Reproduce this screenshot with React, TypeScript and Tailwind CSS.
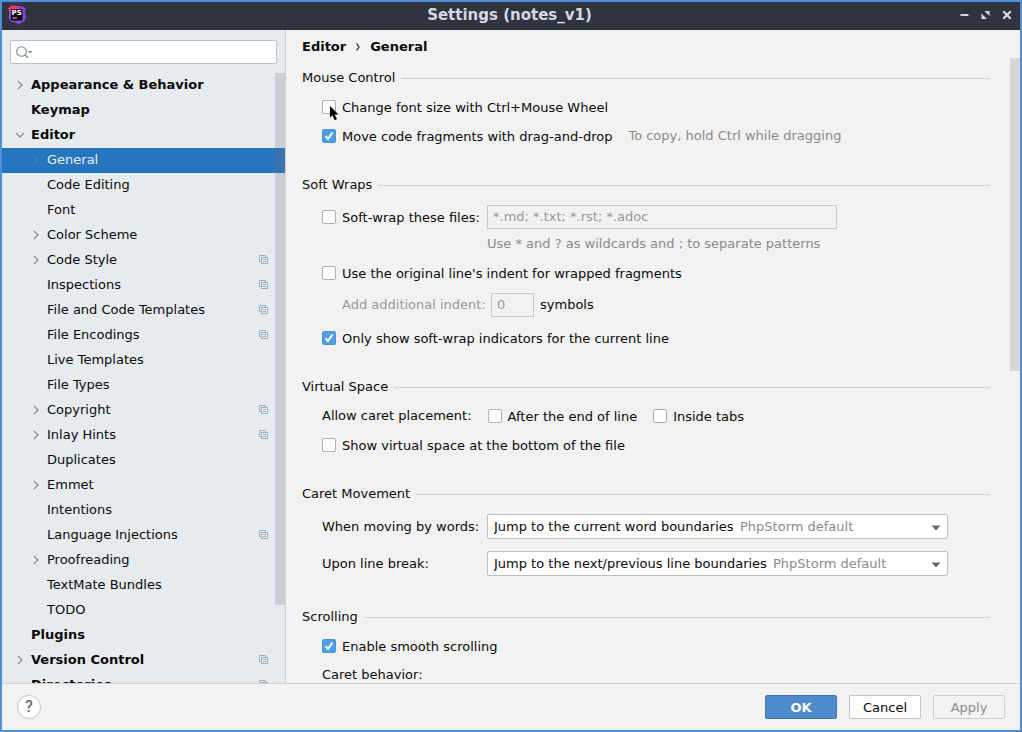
import { useId, type ReactNode } from "react";

type Item = {
  label: string;
  level?: number;
  arrow?: "right" | "down";
  shared?: boolean;
  selected?: boolean;
};

const items: Item[] = [
  { label: "Appearance & Behavior", arrow: "right" },
  { label: "Keymap" },
  { label: "Editor", arrow: "down" },
  { label: "General", level: 1, arrow: "right", selected: true },
  { label: "Code Editing", level: 1 },
  { label: "Font", level: 1 },
  { label: "Color Scheme", level: 1, arrow: "right" },
  { label: "Code Style", level: 1, arrow: "right", shared: true },
  { label: "Inspections", level: 1, shared: true },
  { label: "File and Code Templates", level: 1, shared: true },
  { label: "File Encodings", level: 1, shared: true },
  { label: "Live Templates", level: 1 },
  { label: "File Types", level: 1 },
  { label: "Copyright", level: 1, arrow: "right", shared: true },
  { label: "Inlay Hints", level: 1, arrow: "right", shared: true },
  { label: "Duplicates", level: 1 },
  { label: "Emmet", level: 1, arrow: "right" },
  { label: "Intentions", level: 1 },
  { label: "Language Injections", level: 1, shared: true },
  { label: "Proofreading", level: 1, arrow: "right" },
  { label: "TextMate Bundles", level: 1 },
  { label: "TODO", level: 1 },
  { label: "Plugins" },
  { label: "Version Control", arrow: "right", shared: true },
  { label: "Directories", shared: true },
];

function Logo() {
  return (
    <svg width="20" height="20" viewBox="0 0 20 20" aria-hidden="true">
      <defs>
        <linearGradient id="logo-a" x1="0" y1="0" x2="1" y2="1">
          <stop offset="0" stopColor="#d935a0" />
          <stop offset="0.4" stopColor="#9040d0" />
          <stop offset="1" stopColor="#7a48f0" />
        </linearGradient>
      </defs>
      <path d="M1.500 3 5 1l9 0 4.500 2-.5 4 1 5-1.500 4-6 3.500-3-2-4.500-.5L1.500 13l.8-4z" fill="url(#logo-a)" />
      <path d="M1.500 3 4.500 0.500 10 1l1.500 3H5L2.300 7.500z" fill="#ee3678" />
      <rect x="4" y="4" width="11.500" height="11.500" fill="#0c0610" />
      <text x="4.500" y="10" fontSize="7" fontWeight="700" fill="#fff" fontFamily="DejaVu Sans, sans-serif">
        PS
      </text>
      <rect x="5.500" y="12.500" width="4.500" height="1" fill="#ddd" />
    </svg>
  );
}

function Chevron({ dir, selected }: { dir: "right" | "down"; selected?: boolean }) {
  return (
    <svg
      width="10"
      height="10"
      viewBox="0 0 10 10"
      fill="none"
      strokeWidth="1.300"
      className={selected ? "stroke-[#4c7fae]" : "stroke-[#8a8f93]"}
      aria-hidden="true"
    >
      <path d={dir === "right" ? "M3 1l4 4-4 4" : "M1 3l4 4 4-4"} />
    </svg>
  );
}

function SharedIcon() {
  return (
    <svg width="9" height="9" viewBox="0 0 9 9" fill="none" stroke="#a3aeb8" aria-hidden="true">
      <path d="M2.500 6.500h-2v-6h6v2" />
      <rect x="2.500" y="2.500" width="6" height="6" />
      <path d="M4 4.500h3M4 6.500h3" />
    </svg>
  );
}

function TreeRow({ item }: { item: Item }) {
  const nested = item.level === 1;
  return (
    <li>
      <button
        type="button"
        className={`flex h-[25px] w-full items-center pb-0.5 pr-[17px] text-left ${nested ? "pl-[29px]" : "pl-[13px] font-bold"} ${
          item.selected ? "bg-[#2675bf] text-[#e8f1f9]" : ""
        }`}
      >
        <span className="flex w-4 shrink-0 items-center">
          {item.arrow && <Chevron dir={item.arrow} selected={item.selected} />}
        </span>
        <span className="flex-1 whitespace-nowrap">{item.label}</span>
        {item.shared && <SharedIcon />}
      </button>
    </li>
  );
}

function Check({ label, checked, children }: { label: string; checked?: boolean; children?: ReactNode }) {
  const id = useId();
  return (
    <div className="flex h-5 items-center">
      <span className="relative flex size-3.5">
        <input
          id={id}
          type="checkbox"
          defaultChecked={checked}
          className="peer size-3.5 appearance-none rounded-xs border border-[#b0b0b0] bg-white checked:border-[#4a94da] checked:bg-[#4f9ee3]"
        />
        <svg
          viewBox="0 0 14 14"
          className="pointer-events-none absolute inset-0 hidden size-3.5 peer-checked:block"
          fill="none"
          stroke="#fff"
          strokeWidth="2"
          aria-hidden="true"
        >
          <path d="M3.500 7.300l2.500 2.700 4.500-6.500" />
        </svg>
        {children}
      </span>
      <label htmlFor={id} className="pt-0.5 pl-1.5 whitespace-nowrap">
        {label}
      </label>
    </div>
  );
}

function Section({ title, children }: { title: string; children: ReactNode }) {
  return (
    <section>
      <div className="flex h-5 items-center gap-1.5">
        <h2 className="pt-0.5">{title}</h2>
        <div className="mt-0.5 h-px flex-1 bg-[#cfcfcf]" />
      </div>
      <div className="flex flex-col gap-[9px] pt-2.5 pl-5">{children}</div>
    </section>
  );
}

function Choice({ label, value }: { label: string; value: string }) {
  const id = useId();
  return (
    <div className="flex items-center">
      <label htmlFor={id} className="w-[165px] shrink-0 whitespace-nowrap">
        {label}
      </label>
      <div className="flex h-[25px] w-[461px] items-center rounded-xs border border-[#bfbfbf] bg-white px-1.5">
        <select id={id} className="appearance-none bg-transparent outline-none">
          <option>{value}</option>
        </select>
        <span className="flex-1 pl-1.5 whitespace-nowrap text-[#8a8a8a]">PhpStorm default</span>
        <svg width="10" height="6" viewBox="0 0 10 6" fill="#666" className="mt-0.5" aria-hidden="true">
          <path d="M0.500 0.500h9L5 5.500z" />
        </svg>
      </div>
    </div>
  );
}

export default function App() {
  return (
    <div className="flex h-screen flex-col overflow-hidden border-2 border-[#4d91de] bg-[#f2f2f2] font-['DejaVu_Sans',sans-serif] text-[13px] leading-5 text-[#0a0a0a]">
      <header className="flex h-7 shrink-0 items-center bg-[#2f343f] pr-2 pb-0.5 pl-[5px] text-[#d3dae3]">
        <div className="flex w-16 items-center">
          <Logo />
        </div>
        <h1 className="flex-1 text-center text-[15px] font-bold">Settings (notes_v1)</h1>
        <div className="flex w-16 items-center justify-end gap-3">
          <button type="button" aria-label="Minimize">
            <svg width="9" height="10" viewBox="0 0 9 10" fill="currentColor">
              <path d="M0.500 4h8v2h-8z" />
            </svg>
          </button>
          <button type="button" aria-label="Maximize">
            <svg width="9" height="10" viewBox="0 0 9 10" fill="currentColor">
              <path d="M3.500 1h5v5zM0.500 3.500v5.500h5.500z" />
            </svg>
          </button>
          <button type="button" aria-label="Close">
            <svg width="10" height="10" viewBox="0 0 10 10" fill="none" stroke="currentColor" strokeWidth="2.200">
              <path d="M1.300 1.300l7.400 7.400M8.700 1.300l-7.400 7.400" />
            </svg>
          </button>
        </div>
      </header>

      <div className="flex min-h-0 flex-1">
        <aside className="flex w-[284px] shrink-0 flex-col border-r border-[#d0d3d6] bg-[#e6ebf0]">
          <div className="px-2 pt-2.5 pb-[9px]">
            <div className="flex h-6 items-center rounded-xs border border-[#bdbfc4] bg-white pl-[5px]">
              <svg width="17" height="13" viewBox="0 0 17 13" fill="none" stroke="#7f8b91" aria-hidden="true">
                <circle cx="5.500" cy="5.500" r="4.800" strokeWidth="1.100" />
                <path d="M9 9l3 3" strokeWidth="1.400" />
                <path d="M12 5h4.500L14.250 7.500z" fill="#7f8b91" stroke="none" />
              </svg>
              <input type="text" aria-label="Search settings" className="min-w-0 flex-1 bg-transparent px-1 outline-none" />
            </div>
          </div>
          <nav aria-label="Settings categories" className="relative min-h-0 flex-1 overflow-hidden">
            <ul>
              {items.map((item) => (
                <TreeRow key={item.label} item={item} />
              ))}
            </ul>
            <div className="absolute top-0 right-0 h-[532px] w-2.5 bg-[#737380]/25" />
          </nav>
        </aside>

        <main className="flex min-w-0 flex-1 flex-col">
          <div className="flex h-7 shrink-0 items-center gap-2.5 pt-1.5 pl-4 font-bold">
            <span>Editor</span>
            <svg width="4" height="8" viewBox="0 0 4 8" fill="none" stroke="#222" strokeWidth="1.200" aria-hidden="true">
              <path d="M0.500 0.500L3 4 0.500 7.500" />
            </svg>
            <span>General</span>
          </div>
          <div className="flex min-h-0 flex-1 overflow-hidden">
            <div className="flex min-w-0 flex-1 flex-col gap-7 pt-[9px] pr-5 pl-4">
              <Section title="Mouse Control">
                <Check label="Change font size with Ctrl+Mouse Wheel">
                  <svg
                    width="9"
                    height="15"
                    viewBox="0 0 9 15"
                    className="pointer-events-none absolute top-1.5 left-2"
                    aria-hidden="true"
                  >
                    <path d="M0 0v11.500l2.500-2.300 2.200 5 2.200-1-2.200-4.700H8.500z" fill="#000" />
                  </svg>
                </Check>
                <div className="flex items-center gap-4">
                  <Check label="Move code fragments with drag-and-drop" checked />
                  <span className="whitespace-nowrap text-[#8a8a8a]">To copy, hold Ctrl while dragging</span>
                </div>
              </Section>

              <Section title="Soft Wraps">
                <div className="mt-px">
                  <div className="flex items-center">
                    <div className="w-[165px] shrink-0">
                      <Check label="Soft-wrap these files:" />
                    </div>
                    <input
                      type="text"
                      disabled
                      aria-label="File patterns"
                      defaultValue="*.md; *.txt; *.rst; *.adoc"
                      className="h-6 w-[350px] border border-[#c8c8c8] px-[5px] pb-0.5 text-[#999]"
                    />
                  </div>
                  <p className="pt-[5px] pl-[165px] whitespace-nowrap text-[#8a8a8a]">
                    Use * and ? as wildcards and ; to separate patterns
                  </p>
                </div>
                <Check label="Use the original line's indent for wrapped fragments" />
                <div className="flex items-center pt-px pb-0.5 pl-5">
                  <label htmlFor="indent" className="w-[149px] shrink-0 whitespace-nowrap text-[#999]">
                    Add additional indent:
                  </label>
                  <input
                    id="indent"
                    type="text"
                    disabled
                    defaultValue="0"
                    className="h-6 w-[43px] border border-[#c8c8c8] px-[5px] pb-0.5 text-[#999]"
                  />
                  <span className="pl-1.5">symbols</span>
                </div>
                <Check label="Only show soft-wrap indicators for the current line" checked />
              </Section>

              <Section title="Virtual Space">
                <div className="flex items-center gap-4">
                  <span>Allow caret placement:</span>
                  <Check label="After the end of line" />
                  <Check label="Inside tabs" />
                </div>
                <Check label="Show virtual space at the bottom of the file" />
              </Section>

              <Section title="Caret Movement">
                <div className="flex flex-col gap-3 pt-px pb-0.5">
                  <Choice label="When moving by words:" value="Jump to the current word boundaries" />
                  <Choice label="Upon line break:" value="Jump to the next/previous line boundaries" />
                </div>
              </Section>

              <Section title="Scrolling">
                <Check label="Enable smooth scrolling" checked />
                <span>Caret behavior:</span>
              </Section>
            </div>
            <div className="w-2.5 shrink-0">
              <div className="h-[313px] bg-[#d6d6d6]" />
            </div>
          </div>
        </main>
      </div>

      <footer className="flex h-[47px] shrink-0 items-center justify-between border-t border-[#cfcfcf] px-[15px]">
        <button
          type="button"
          aria-label="Help"
          className="flex size-6 items-center justify-center rounded-full border border-[#c4c4c4] bg-white font-['Roboto',sans-serif] text-base font-medium text-[#6e6e6e]"
        >
          ?
        </button>
        <div className="flex gap-3">
          <button type="button" className="h-6 w-[72px] rounded-xs border border-[#4577b0] bg-[#4e8bcc] leading-none font-bold text-white">
            OK
          </button>
          <button type="button" className="h-6 w-[72px] rounded-xs border border-[#c4c4c4] bg-white leading-none">
            Cancel
          </button>
          <button type="button" disabled className="h-6 w-[72px] rounded-xs border border-[#cfcfcf] leading-none text-[#8c8c8c]">
            Apply
          </button>
        </div>
      </footer>
    </div>
  );
}
